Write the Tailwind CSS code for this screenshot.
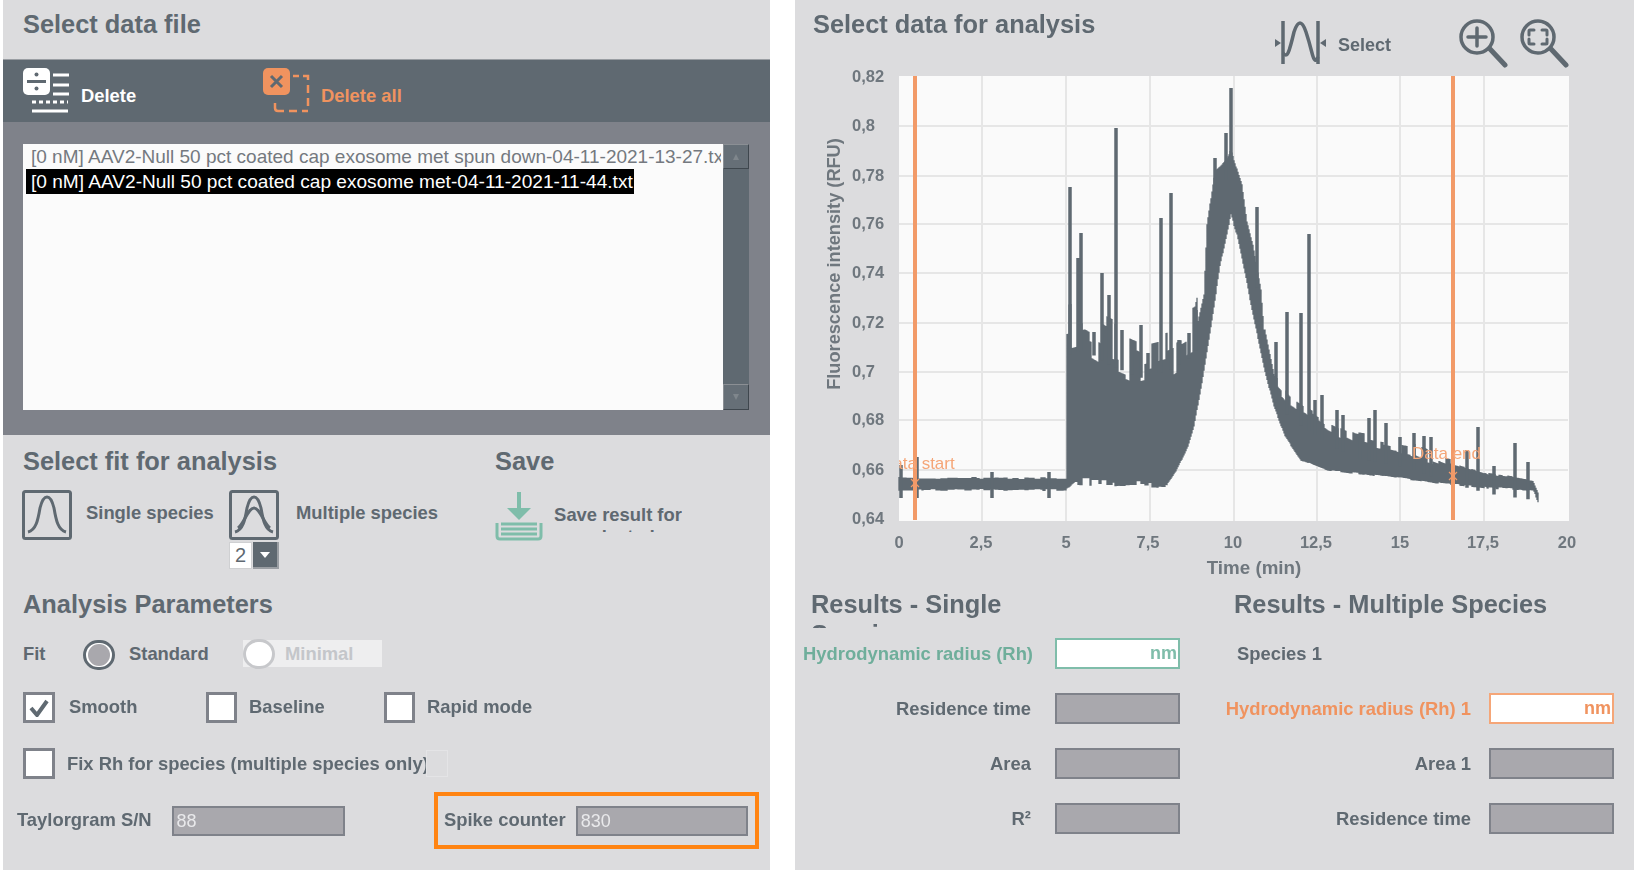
<!DOCTYPE html>
<html lang="en">
<head>
  <meta charset="UTF-8" />
  <title>Taylorgram analysis</title>
  <script src="https://cdn.jsdelivr.net/npm/@tailwindcss/browser@4"></script>
</head>
<body class="bg-white">
<div class="w-[1634px] h-[878px] flex gap-[25px] pl-[3px] overflow-hidden blur-[0.4px] font-['Liberation_Sans',Arial,sans-serif] text-[#5f6971] font-bold text-[18.4px]">

  <!-- Left panel -->
  <div class="w-[767px] h-[870px] bg-[#dcdcde] shrink-0">
    <div class="h-[59px] pl-5 pt-[12px] text-[25.4px] leading-[24px]">Select data file</div>

    <!-- Toolbar -->
    <div class="h-[63px] bg-[#5f6971] border-t border-[#9a9ea3] flex items-center pl-5">
      <svg class="w-[48px] h-[46px] shrink-0" viewBox="0 0 48 46">
        <rect x="0" y="0" width="27" height="27" rx="5" fill="#fff"/>
        <rect x="4" y="12" width="19" height="3" fill="#5f6971"/>
        <circle cx="13.5" cy="6.5" r="2" fill="#5f6971"/><circle cx="13.5" cy="20.5" r="2" fill="#5f6971"/>
        <path d="M30 7h16M30 17h16M30 26h16" stroke="#fff" stroke-width="3"/>
        <path d="M9 34h36" stroke="#fff" stroke-width="3" stroke-dasharray="4 3"/>
        <path d="M9 43h36" stroke="#fff" stroke-width="3"/>
      </svg>
      <span class="ml-[10px] mt-[9px] text-white w-[182px]">Delete</span>
      <svg class="w-[48px] h-[46px] shrink-0" viewBox="0 0 48 46">
        <rect x="0" y="0" width="27" height="27" rx="5" fill="#f0935f"/>
        <path d="M8 8l11 11M19 8l-11 11" stroke="#5f6971" stroke-width="3"/>
        <path d="M30 8h6M40 8h5v4M45 17v8M45 30v8M45 43h-6M34 43h-8M21 43h-6q-3 0-3-3v-5" fill="none" stroke="#f0935f" stroke-width="2.5"/>
      </svg>
      <span class="ml-[10px] mt-[9px] text-[#f0935f]">Delete all</span>
    </div>

    <!-- File list -->
    <div class="h-[313px] bg-[#7f828a] pt-[22px] pl-5">
      <div class="flex w-[726px] h-[266px]">
        <div class="w-[700px] bg-[#fbfbfb] overflow-hidden whitespace-nowrap font-normal text-[19.1px] leading-[25px] pl-[3px]">
          <div class="h-[25px] w-[695px] pl-[5px] text-[19px] text-[#74797f] overflow-hidden">[0 nM] AAV2-Null 50 pct coated cap exosome met spun down-04-11-2021-13-27.txt</div>
          <div class="h-[25px] w-[608px] pl-[5px] bg-black text-white">[0 nM] AAV2-Null 50 pct coated cap exosome met-04-11-2021-11-44.txt</div>
        </div>
        <div class="w-[26px] bg-[#5f6971] flex flex-col justify-between">
          <div class="h-[25px] bg-[#666f77] border border-[#8b8f94] border-b-[#3f474e] border-r-[#3f474e] flex items-center justify-center">
            <svg class="w-2 h-2" viewBox="0 0 8 8"><path d="M4 1l3 6H1z" fill="#7f868c"/></svg>
          </div>
          <div class="h-[26px] bg-[#666f77] border border-[#8b8f94] border-b-[#3f474e] border-r-[#3f474e] flex items-center justify-center">
            <svg class="w-2 h-2" viewBox="0 0 8 8"><path d="M4 7L1 1h6z" fill="#7f868c"/></svg>
          </div>
        </div>
      </div>
    </div>

    <!-- Fit + save -->
    <div class="h-[157px] pl-[19px] pt-[14px] flex">
      <div class="w-[473px]">
        <div class="pl-px text-[25.4px] leading-[24px]">Select fit for analysis</div>
        <div class="flex mt-[17px]">
          <div class="w-[207px] flex items-start">
            <svg class="w-[50px] h-[50px] shrink-0" viewBox="0 0 50 50" fill="none" stroke="#5f6971">
              <rect x="1.5" y="1.5" width="47" height="47" rx="2" stroke-width="3"/>
              <path d="M6 42C14 40 16 30 18 18C20 10 22 7 25 7C28 7 30 10 32 18C34 30 36 40 44 42" stroke-width="3"/>
            </svg>
            <span class="ml-[14px] mt-[13px] leading-[20px] whitespace-nowrap">Single species</span>
          </div>
          <div class="w-[50px]">
            <svg class="w-[50px] h-[50px]" viewBox="0 0 50 50" fill="none" stroke="#5f6971">
              <rect x="1.5" y="1.5" width="47" height="47" rx="2" stroke-width="3"/>
              <path d="M6 42C14 40 16 30 18 18C20 10 22 7 25 7C28 7 30 10 32 18C34 30 36 40 44 42" stroke-width="3"/>
              <path d="M9 38C15 34 19 18 25 18C31 18 35 34 41 38" stroke-width="3"/>
            </svg>
            <div class="flex mt-[2px] h-[27px]">
              <div class="w-[23px] bg-white border border-[#cfd0d2] text-center font-normal text-[20px] leading-[25px]">2</div>
              <div class="w-[26px] ml-px bg-[#5f6971] border-r-2 border-b-2 border-[#9a9ea3] flex items-center justify-center">
                <svg class="w-[10px] h-[8px]" viewBox="0 0 10 8"><path d="M0 1h10L5 7z" fill="#fff"/></svg>
              </div>
            </div>
          </div>
          <span class="ml-[17px] mt-[13px] leading-[20px] whitespace-nowrap">Multiple species</span>
        </div>
      </div>
      <div>
        <div class="text-[25.4px] leading-[24px]">Save</div>
        <div class="flex mt-[18px]">
          <svg class="w-[48px] h-[50px] shrink-0" viewBox="0 0 48 50" fill="none" stroke="#7fbdaa">
            <path d="M24 1v18" stroke-width="4"/>
            <path d="M12 17h24L24 29z" fill="#7fbdaa" stroke="none"/>
            <path d="M2 32v13q0 3 3 3h38q3 0 3-3V32" stroke-width="3"/>
            <path d="M6 33h36M6 38h36M6 43h36" stroke-width="3"/>
          </svg>
          <div class="ml-[11px] mt-[13px] w-[128px] h-[28px] overflow-hidden leading-[22px] text-center whitespace-nowrap">Save result for<br/>selected</div>
        </div>
      </div>
    </div>

    <!-- Analysis parameters -->
    <div class="pl-5">
      <div class="text-[25.4px] leading-[24px]">Analysis Parameters</div>
      <div class="flex items-center h-[30px] mt-[24px]">
        <span class="w-[60px] pb-[2px]">Fit</span>
        <span class="w-[32px] h-[30px] rounded-full border-[3px] border-[#5f6971] flex items-center justify-center bg-white">
          <span class="w-[22px] h-[22px] rounded-full bg-[#a9a8ad]"></span>
        </span>
        <span class="ml-[14px] w-[114px] pb-[2px]">Standard</span>
        <span class="flex items-center h-[27px] w-[139px] bg-[#eeeeef] self-start">
          <span class="w-[32px] h-[30px] rounded-full border-[3px] border-[#c7c8cb] bg-white"></span>
          <span class="ml-[10px] text-[#c4c6ca]">Minimal</span>
        </span>
      </div>
      <div class="flex items-center h-[31px] mt-[22px]">
        <span class="w-[32px] h-[31px] bg-white border-[3px] border-[#7f828a] flex items-center justify-center">
          <svg class="w-[20px] h-[18px]" viewBox="0 0 20 18"><path d="M2 9l6 7L18 2" fill="none" stroke="#5f6971" stroke-width="4"/></svg>
        </span>
        <span class="ml-[14px] w-[137px] pb-[2px]">Smooth</span>
        <span class="w-[31px] h-[31px] bg-white border-[3px] border-[#7f828a]"></span>
        <span class="ml-3 w-[135px] pb-[2px]">Baseline</span>
        <span class="w-[31px] h-[31px] bg-white border-[3px] border-[#7f828a]"></span>
        <span class="ml-[12px] pb-[2px]">Rapid mode</span>
      </div>
      <div class="flex items-center h-[31px] mt-[25px]">
        <span class="w-[32px] h-[31px] bg-white border-[3px] border-[#7f828a]"></span>
        <span class="ml-3 whitespace-nowrap">Fix Rh for species (multiple species only)</span>
        <span class="-ml-[3px] w-[22px] h-[27px] bg-[#dcdcde] border border-[#e4e4e6]"></span>
      </div>
    </div>
    <div class="flex items-center justify-between h-[57px] mt-[13px] pl-[14px] pr-[11px]">
      <div class="flex items-center">
        <span class="whitespace-nowrap pb-[2px]">Taylorgram S/N</span>
        <span class="ml-[20px] w-[173px] h-[30px] bg-[#a9a8ad] border-2 border-[#7f828a] pl-[3px] font-normal text-[18px] leading-[26px] text-[#e9e9eb]">88</span>
      </div>
      <div class="flex items-center w-[325px] h-[57px] border-4 border-[#ff8412] pl-[6px]">
        <span class="whitespace-nowrap pb-[2px]">Spike counter</span>
        <span class="ml-[10px] w-[172px] h-[30px] bg-[#a9a8ad] border-2 border-[#7f828a] pl-[3px] font-normal text-[18px] leading-[26px] text-[#e9e9eb]">830</span>
      </div>
    </div>
  </div>

  <!-- Right panel -->
  <div class="w-[839px] h-[870px] bg-[#dcdcde] shrink-0">
    <div class="h-[76px] flex items-start pl-[18px]">
      <div class="w-[459px] pt-[12px] text-[25.4px] leading-[24px]">Select data for analysis</div>
      <svg class="w-[56px] h-[48px] mt-[18px] shrink-0" viewBox="0 0 56 48" fill="none" stroke="#5f6971">
        <path d="M11 3v43M46 3v43" stroke-width="3.5"/>
        <path d="M11 35q3 4 5 0t6-21q3-9 6-9t6 9 6 21 6 4" stroke-width="3.5"/>
        <path d="M3 21l6 4-6 4zM54 21l-6 4 6 4z" fill="#5f6971" stroke="none"/>
      </svg>
      <span class="ml-[10px] w-[120px] mt-[35px] leading-[20px] text-[18px]">Select</span>
      <svg class="w-[112px] h-[50px] mt-[18px] shrink-0" viewBox="0 0 112 50" fill="none" stroke="#5f6971" stroke-width="3.5" stroke-linecap="round">
        <circle cx="19" cy="19" r="16"/>
        <path d="M19 10v18M10 19h18"/>
        <path d="M32 31l15 16" stroke-width="5"/>
        <circle cx="80" cy="19" r="16"/>
        <path d="M76 12h-4q-1 0-1 1v4M84 12h4q1 0 1 1v4M76 26h-4q-1 0-1-1v-4M84 26h4q1 0 1-1v-4" stroke-width="3"/>
        <path d="M93 31l15 16" stroke-width="5"/>
      </svg>
    </div>

    <!-- Chart, drawn in page coordinates -->
    <svg class="block w-[839px] h-[504px] overflow-visible" viewBox="795 76 839 504">
      <rect x="899" y="76" width="670" height="445" fill="#fafafa"/>
      <path d="M982 76V521M1066 76V521M1150 76V521M1234 76V521M1317 76V521M1400 76V521M1484 76V521" stroke="#e6e6e6" stroke-width="2"/>
      <path d="M899 126H1568M899 176H1568M899 224H1568M899 273H1568M899 323H1568M899 372H1568M899 420H1568M899 470H1568" stroke="#e6e6e6" stroke-width="2"/>
      <path id="band" fill="none" stroke="#5f6971" stroke-width="1.3"/>
      <path id="spikes" fill="none" stroke="#5f6971" stroke-width="3.5"/>
      <path d="M915 76V520M1453 76V520" stroke="#f29a68" stroke-width="4"/>
      <path d="M911 479l8 8M919 479l-8 8M1449 472l8 8M1457 472l-8 8" stroke="#f29a68" stroke-width="1.2"/>
      <svg x="899" y="440" width="70" height="40" viewBox="899 440 70 40">
        <text x="881" y="469" class="fill-[#f5a678] font-normal text-[17px]">Data start</text>
      </svg>
      <text x="1412" y="459" class="fill-[#f5a678] font-normal text-[17px]">Data end</text>

      <g class="fill-[#6f777e] text-[16.5px]">
        <text x="852" y="82">0,82</text><text x="852" y="131">0,8</text><text x="852" y="181">0,78</text>
        <text x="852" y="229">0,76</text><text x="852" y="278">0,74</text><text x="852" y="328">0,72</text>
        <text x="852" y="377">0,7</text><text x="852" y="425">0,68</text><text x="852" y="475">0,66</text>
        <text x="852" y="524">0,64</text>
        <g text-anchor="middle">
          <text x="899" y="548">0</text><text x="981" y="548">2,5</text><text x="1066" y="548">5</text>
          <text x="1148" y="548">7,5</text><text x="1233" y="548">10</text><text x="1316" y="548">12,5</text>
          <text x="1400" y="548">15</text><text x="1483" y="548">17,5</text><text x="1567" y="548">20</text>
          <text x="1254" y="574" class="text-[18.8px]">Time (min)</text>
        </g>
        <text transform="translate(840 264) rotate(-90)" text-anchor="middle" class="text-[18.2px]">Fluorescence intensity (RFU)</text>
      </g>
    </svg>

    <!-- Results -->
    <div class="flex">
      <div class="w-[385px]">
        <div class="pl-4 h-[39px] w-[220px] overflow-hidden text-[25.4px] leading-[30px] pt-[9px] box-content">Results - Single Species</div>
        <div class="flex justify-end items-center h-[31px] mt-[10px]">
          <span class="text-[#6fae9b] mr-[22px] whitespace-nowrap">Hydrodynamic radius (Rh)</span>
          <span class="w-[125px] h-[31px] bg-white border-2 border-[#7fbdaa] text-right pr-[1px] text-[#7fbdaa] leading-[27px] text-[18px]">nm</span>
        </div>
        <div class="flex justify-end items-center h-[31px] mt-[24px]">
          <span class="mr-6">Residence time</span>
          <span class="w-[125px] h-[31px] bg-[#a9a8ad] border-2 border-[#7f828a]"></span>
        </div>
        <div class="flex justify-end items-center h-[31px] mt-[24px]">
          <span class="mr-6">Area</span>
          <span class="w-[125px] h-[31px] bg-[#a9a8ad] border-2 border-[#7f828a]"></span>
        </div>
        <div class="flex justify-end items-center h-[31px] mt-[24px]">
          <span class="mr-6">R²</span>
          <span class="w-[125px] h-[31px] bg-[#a9a8ad] border-2 border-[#7f828a]"></span>
        </div>
      </div>
      <div class="w-[434px]">
        <div class="pl-[54px] h-[39px] overflow-hidden text-[25.4px] leading-[30px] pt-[9px] box-content whitespace-nowrap">Results - Multiple Species</div>
        <div class="flex items-center h-[31px] mt-[10px] pl-[57px]">Species 1</div>
        <div class="flex justify-end items-center h-[31px] mt-[24px]">
          <span class="text-[#f0935f] mr-[18px] whitespace-nowrap">Hydrodynamic radius (Rh) 1</span>
          <span class="w-[125px] h-[31px] bg-white border-2 border-[#f5a678] text-right pr-[1px] text-[#f0935f] leading-[27px] text-[18px]">nm</span>
        </div>
        <div class="flex justify-end items-center h-[31px] mt-[24px]">
          <span class="mr-[18px]">Area 1</span>
          <span class="w-[125px] h-[31px] bg-[#a9a8ad] border-2 border-[#7f828a]"></span>
        </div>
        <div class="flex justify-end items-center h-[31px] mt-[24px]">
          <span class="mr-[18px]">Residence time</span>
          <span class="w-[125px] h-[31px] bg-[#a9a8ad] border-2 border-[#7f828a]"></span>
        </div>
      </div>
    </div>
  </div>
</div>

<script>
  // taylorgram trace: envelope points read off the plot, in page pixels
  const upper = [[899,478],[1066,478],[1067,335],[1085,330],[1110,345],[1140,358],[1170,350],[1195,335],[1204,295],[1207,225],[1215,170],[1226,160],[1231,150],[1234,160],[1242,185],[1247,222],[1253,245],[1261,290],[1264,330],[1274,380],[1290,398],[1328,424],[1355,438],[1409,448],[1446,462],[1490,474],[1533,480],[1538,492]];
  const lower = [[899,490],[1066,490],[1075,482],[1167,484],[1177,470],[1188,447],[1194,427],[1202,383],[1210,333],[1215,300],[1220,267],[1231,215],[1237,235],[1247,283],[1250,300],[1264,367],[1274,407],[1285,437],[1301,460],[1328,470],[1382,476],[1436,483],[1490,488],[1533,490],[1538,502]];
  const spikes = [[901,465],[917,457],[992,472],[1049,472],[1070,187],[1081,233],[1078,258],[1094,332],[1102,273],[1109,295],[1116,128],[1122,330],[1132,352],[1141,325],[1148,353],[1159,362],[1161,218],[1171,193],[1179,340],[1189,333],[1196,310],[1215,158],[1222,205],[1226,133],[1231,88],[1257,207],[1276,342],[1287,312],[1301,313],[1309,234],[1315,400],[1322,395],[1337,410],[1343,415],[1360,437],[1369,418],[1375,410],[1386,423],[1400,437],[1414,433],[1424,436],[1431,437],[1467,450],[1478,427],[1494,466],[1515,443],[1528,462]];

  function interp(points, x) {
    for (let i = 1; i < points.length; i++) {
      if (x <= points[i][0]) {
        const [x0, y0] = points[i - 1], [x1, y1] = points[i];
        return y0 + (y1 - y0) * (x - x0) / (x1 - x0);
      }
    }
    return points[points.length - 1][1];
  }

  let seed = 7;
  function rand() {
    seed = (seed * 16807) % 2147483647;
    return seed / 2147483647;
  }

  // roughness comes in short blocks, so the top edge looks like narrow teeth
  let band = '', topOffset = 0, bottomOffset = 0, blockEnd = 0;
  for (let x = 899; x <= 1538; x++) {
    if (x >= blockEnd) {
      const rough = x > 1067 && x < 1195 ? 60 : x > 1264 && x < 1450 ? 16 : 2;
      topOffset = rand() * rough - rough / 2;
      bottomOffset = x > 1075 && x < 1170 ? rand() * 8 - 4 : rand() * 2 - 1;
      blockEnd = x + 2 + Math.floor(rand() * 6);
    }
    const top = interp(upper, x) + topOffset;
    const bottom = interp(lower, x) + bottomOffset;
    band += `M${x} ${top.toFixed(1)}V${bottom.toFixed(1)}`;
  }
  document.getElementById('band').setAttribute('d', band);

  document.getElementById('spikes').setAttribute('d', spikes.map(([x, y]) =>
    `M${x} ${y}V${Math.max(y, interp(upper, x) + 20).toFixed(1)}`).join(''));
</script>
</body>
</html>
